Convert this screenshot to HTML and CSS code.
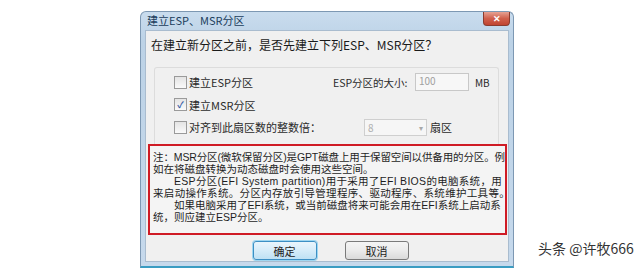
FILE: index.html
```html
<html>

<head>
    <link rel="stylesheet" href="styles.css">
</head>

<body>
    <div class="dialog">
        <div class="titlebar">
            <span class="title">建立ESP、MSR分区</span>
            <button class="close">&#x2715;</button>
        </div>
        <div class="content">
            <div class="question">在建立新分区之前，是否先建立下列ESP、MSR分区？</div>

            <div class="group">
                <div class="row">
                    <label class="opt"><span class="check"></span>建立ESP分区</label>
                    <span class="size-label">ESP分区的大小:</span>
                    <span class="field">100</span>
                    <span class="unit">MB</span>
                </div>
                <div class="row">
                    <label class="opt"><span class="check checked">&#x2713;</span>建立MSR分区</label>
                </div>
                <div class="row">
                    <label class="opt wide"><span class="check"></span>对齐到此扇区数的整数倍：</label>
                    <span class="combo">8<span class="arrow">&#x25BE;</span></span>
                    <span class="unit">扇区</span>
                </div>
            </div>

            <div class="note">
                <div class="line tight">注：MSR分区(微软保留分区)是GPT磁盘上用于保留空间以供备用的分区。例</div>
                <div class="line">如在将磁盘转换为动态磁盘时会使用这些空间。</div>
                <div class="line indent wide-3">ESP分区(EFI System partition)用于采用了EFI BIOS的电脑系统，用</div>
                <div class="line wide-4">来启动操作系统。分区内存放引导管理程序、驱动程序、系统维护工具等。</div>
                <div class="line indent">如果电脑采用了EFI系统，或当前磁盘将来可能会用在EFI系统上启动系</div>
                <div class="line">统，则应建立ESP分区。</div>
            </div>

            <div class="buttons">
                <button class="btn default">确定</button>
                <button class="btn">取消</button>
            </div>
        </div>
    </div>

    <div class="watermark">头条 @许牧666</div>
</body>

</html>
```

FILE: styles.css
```css
body {
    font-family: "Noto Sans CJK SC", "Noto Sans", sans-serif;
    background-color: #fff;
    margin: 0;
    padding: 11px 0 0 140px;
    width: 640px;
    height: 270px;
    box-sizing: border-box;
    display: flex;
    overflow: hidden;
}

.dialog {
    width: 374px;
    height: 257px;
    box-sizing: border-box;
    border: 1px solid #7d98b3;
    border-bottom: 2px solid #3a9cc2;
    border-radius: 6px 6px 0 0;
    background: linear-gradient(#c9dcee, #bcd2e6 30px, #c6d9ec);
    padding: 0 4px 4px;
    display: flex;
    flex-direction: column;
}

.titlebar {
    height: 18px;
    display: flex;
    align-items: flex-start;
    justify-content: space-between;
}

.title {
    font-size: 11px;
    line-height: 17px;
    color: #203d5c;
    padding-left: 2px;
}

.close {
    width: 27px;
    height: 14px;
    margin-right: -1px;
    padding: 0;
    border: 1px solid #8a3b2e;
    border-top: none;
    border-radius: 0 0 4px 4px;
    background: linear-gradient(#e6a293, #d0604c 50%, #c04430);
    color: #fff;
    font-size: 9px;
    line-height: 12px;
    font-weight: bold;
}

.content {
    flex: 1;
    background-color: #f0f0f0;
    border: 1px solid #a9bccf;
    display: flex;
    flex-direction: column;
    padding: 0 1px;
}

.question {
    font-size: 12px;
    line-height: 14px;
    color: #1a1a1a;
    padding: 7px 0 0 4px;
    height: 29px;
    box-sizing: border-box;
}

.group {
    margin: 7px 8px 0 7px;
    height: 77px;
    border: 1px solid #dcdcdc;
    border-bottom: none;
    border-radius: 3px 3px 0 0;
    padding-top: 3px;
    box-sizing: border-box;
}

.row {
    height: 22.5px;
    display: flex;
    align-items: center;
    font-size: 11px;
    color: #2a2a2a;
}

.opt {
    width: 159px;
    padding-left: 19px;
    display: flex;
    align-items: center;
    flex-shrink: 0;
}

.opt.wide {
    width: 190px;
}

.check {
    width: 11px;
    height: 11px;
    border: 1px solid #9a9a9a;
    background: linear-gradient(#e4e4e4, #fafafa);
    margin-right: 2px;
    font-size: 9px;
    line-height: 11px;
    text-align: center;
    color: #3a5ea8;
    font-weight: bold;
}

.size-label {
    width: 82px;
    flex-shrink: 0;
    font-size: 10.5px;
    white-space: nowrap;
}

.field {
    width: 54px;
    height: 18px;
    box-sizing: border-box;
    border: 1px solid #c8c8c8;
    background-color: #f7f7f7;
    color: #a0a0a0;
    font-size: 10px;
    line-height: 14px;
    padding-left: 3px;
}

.unit {
    margin-left: 6px;
    font-size: 10px;
}

.row .combo + .unit {
    margin-left: 3px;
    font-size: 11px;
}

.combo {
    width: 63px;
    height: 17px;
    box-sizing: border-box;
    border: 1px solid #cfcfcf;
    background-color: #f6f6f6;
    color: #b0b0b0;
    font-size: 10px;
    line-height: 15px;
    padding: 0 3px;
    display: flex;
    justify-content: space-between;
}

.arrow {
    font-size: 8px;
    color: #a8a8a8;
}

.note {
    margin: 0 0 0 1px;
    height: 91px;
    box-sizing: border-box;
    border: 2px solid #cf1b25;
    background-color: #f4f4f4;
    padding: 5px 0 0 3px;
    font-family: "Liberation Sans", "Noto Sans CJK SC", sans-serif;
    font-size: 10.5px;
    line-height: 12px;
    color: #1e1e1e;
}

.line {
    white-space: nowrap;
}

.tight {
    letter-spacing: -0.12px;
}

.wide-3 {
    letter-spacing: 0.3px;
}

.wide-4 {
    letter-spacing: 0.32px;
}

.indent {
    padding-left: 21px;
}

.buttons {
    display: flex;
    justify-content: center;
    gap: 28px;
    padding: 6px 0 0 7px;
}

.btn {
    width: 64px;
    height: 19px;
    padding: 0;
    border: 1px solid #7a7a7a;
    border-radius: 3px;
    background: linear-gradient(#f4f4f4, #ebebeb 50%, #dadada);
    font-family: "Noto Sans CJK SC", sans-serif;
    font-size: 11px;
    line-height: 16px;
    color: #222;
}

.btn.default {
    border-color: #3c8fc4;
    background: linear-gradient(#e9f5fc, #d6ecf9 50%, #bfe1f4);
    box-shadow: 0 0 0 1px #9fd6f0;
}

.watermark {
    align-self: flex-end;
    margin: 0 0 14px 24px;
    font-size: 14px;
    line-height: 16px;
    color: #333;
    white-space: nowrap;
}
```
